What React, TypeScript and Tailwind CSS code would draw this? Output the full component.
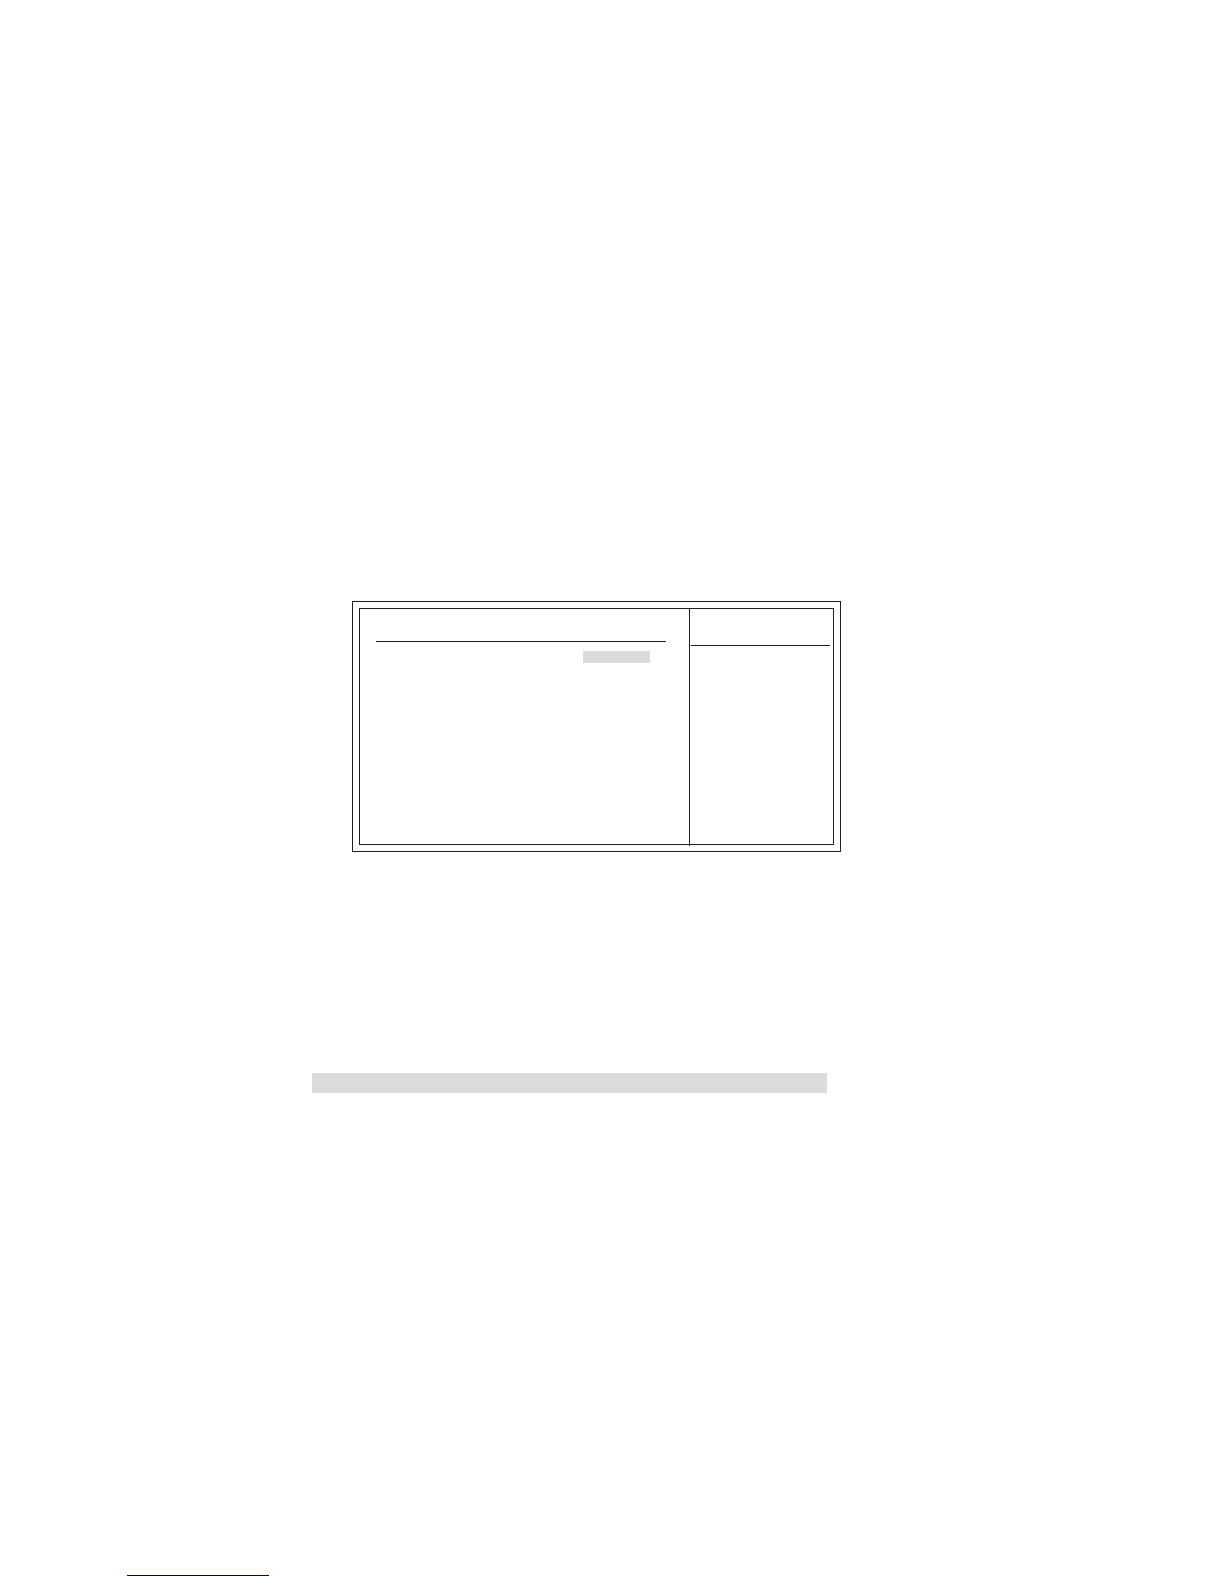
function SetupItems() {
  return (
    <section className="flex flex-col pt-8">
      <hr className="mr-[23px] ml-4 border-t border-[#231f20]" />
      <div className="mt-[9px] mr-[39px] h-3 w-[67px] self-end bg-[#dcdcdc]" />
    </section>
  );
}

function ItemHelp() {
  return (
    <aside className="-mb-0.5 border-l border-[#231f20] pt-9">
      <hr className="mr-[3px] ml-px border-t border-[#231f20]" />
    </aside>
  );
}

function SetupFrame() {
  return (
    <div className="mr-[383px] ml-[352px] border border-[#231f20] p-1.5">
      <div className="grid min-h-[237px] grid-cols-[1fr_144px] border border-[#231f20]">
        <SetupItems />
        <ItemHelp />
      </div>
    </div>
  );
}

export default function App() {
  return (
    <main className="flex min-h-screen flex-col bg-white pt-[601px] pb-2">
      <SetupFrame />
      <div className="mt-[221px] mr-[397px] ml-[312px] h-5 bg-[#dcdcdc]" />
      <footer className="mt-auto">
        <hr className="ml-[127px] w-[142px] border-t border-[#00007f]" />
      </footer>
    </main>
  );
}
